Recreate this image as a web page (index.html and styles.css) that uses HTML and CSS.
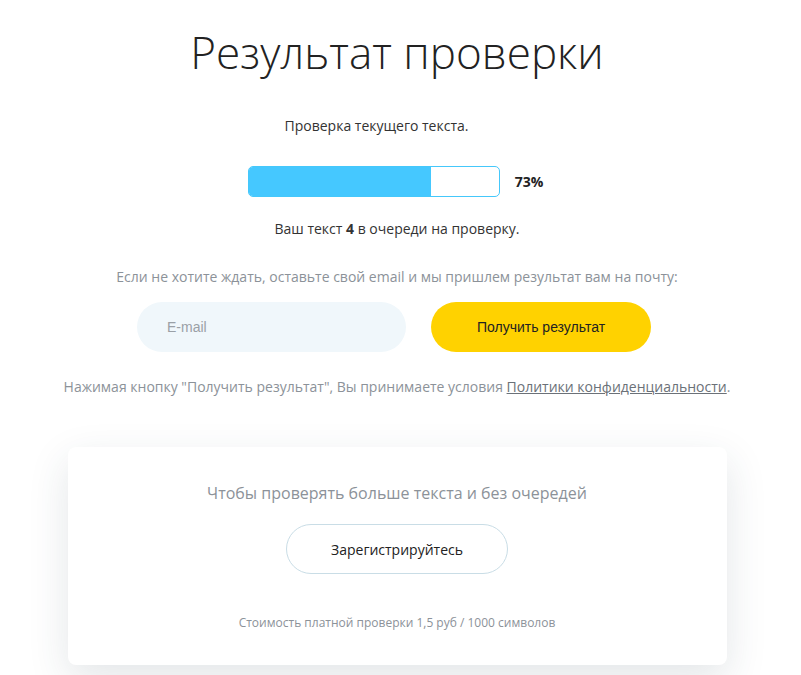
FILE: index.html
```html
<!DOCTYPE html>
<html lang="ru">
<head>
<meta charset="utf-8">
<title>Результат проверки</title>
<link rel="stylesheet" href="styles.css">
</head>
<body>
<main class="page">
  <h1 class="title">Результат проверки</h1>
  <p class="status">Проверка текущего текста.</p>
  <div class="progress-row">
    <div class="progress"><div class="progress-fill" style="width:73%"></div></div>
    <span class="progress-value">73%</span>
  </div>
  <p class="queue">Ваш текст <b>4</b> в очереди на проверку.</p>
  <p class="hint">Если не хотите ждать, оставьте свой email и мы пришлем результат вам на почту:</p>
  <form class="mail-form">
    <input class="mail-input" type="text" placeholder="E-mail">
    <button class="mail-button" type="button">Получить результат</button>
  </form>
  <p class="consent">Нажимая кнопку "Получить результат", Вы принимаете условия <a class="consent-link" href="#">Политики конфиденциальности</a>.</p>
  <section class="card">
    <p class="card-title">Чтобы проверять больше текста и без очередей</p>
    <button class="register" type="button">Зарегистрируйтесь</button>
    <p class="price">Стоимость платной проверки 1,5 руб / 1000 символов</p>
  </section>
</main>
</body>
</html>
```
FILE: styles.css
```css
html, body {
  margin: 0;
  padding: 0;
  background: #fff;
}
body {
  font-family: "Open Sans", "Liberation Sans", sans-serif;
  color: #333;
  overflow: hidden;
  height: 675px;
}
.page {
  display: flex;
  flex-direction: column;
  align-items: center;
  padding-top: 22px;
  padding-right: 7px;
}
.title {
  margin: 0;
  font-weight: 300;
  font-size: 44px;
  line-height: 60px;
  color: #222;
}
.status {
  margin: 34px 41px 0 0;
  font-size: 14px;
  line-height: 20px;
  color: #333;
}
.progress-row {
  display: flex;
  align-items: center;
  margin: 30px 3px 0 0;
}
.progress {
  width: 250px;
  height: 29px;
  border: 1px solid #45c8fb;
  border-radius: 5px;
  overflow: hidden;
  background: #fff;
}
.progress-fill {
  height: 100%;
  background: #45c8ff;
}
.progress-value {
  margin-left: 15px;
  font-weight: 700;
  font-size: 14px;
  color: #222;
}
.queue {
  margin: 22px 0 0;
  font-size: 14px;
  line-height: 20px;
}
.queue b {
  font-weight: 700;
}
.hint {
  margin: 28px 0 0;
  font-size: 14px;
  line-height: 20px;
  color: #8c9299;
}
.mail-form {
  display: flex;
  gap: 25px;
  margin: 15px 6px 0 0;
}
.mail-input {
  box-sizing: border-box;
  width: 269px;
  height: 50px;
  border: none;
  border-radius: 25px;
  background: #f0f7fb;
  padding: 0 30px;
  font-family: "Liberation Sans", Arial, sans-serif;
  font-size: 14px;
  color: #333;
  outline: none;
}
.mail-input::placeholder {
  color: #9aa0a6;
}
.mail-button {
  width: 220px;
  height: 50px;
  border: none;
  border-radius: 25px;
  background: #ffd200;
  font-family: "Liberation Sans", Arial, sans-serif;
  font-size: 14px;
  color: #222;
}
.consent {
  margin: 25px 0 0;
  font-size: 14px;
  line-height: 20px;
  color: #8c9299;
}
.consent-link {
  color: #6b7178;
  text-decoration: underline;
}
.card {
  box-sizing: border-box;
  width: 659px;
  height: 218px;
  margin-top: 50px;
  background: #fff;
  border-radius: 8px;
  box-shadow: 0 14px 40px rgba(40, 60, 80, 0.13);
  display: flex;
  flex-direction: column;
  align-items: center;
  padding-top: 35px;
}
.card-title {
  margin: 0;
  font-size: 16px;
  line-height: 22px;
  color: #8c9299;
}
.register {
  box-sizing: border-box;
  margin-top: 20px;
  width: 222px;
  height: 50px;
  border: 1px solid #c9dde6;
  border-radius: 25px;
  background: #fff;
  font-family: "Open Sans", sans-serif;
  font-size: 14px;
  color: #222;
}
.price {
  margin: 41px 0 0;
  font-size: 12px;
  line-height: 16px;
  color: #8c9299;
}
```
